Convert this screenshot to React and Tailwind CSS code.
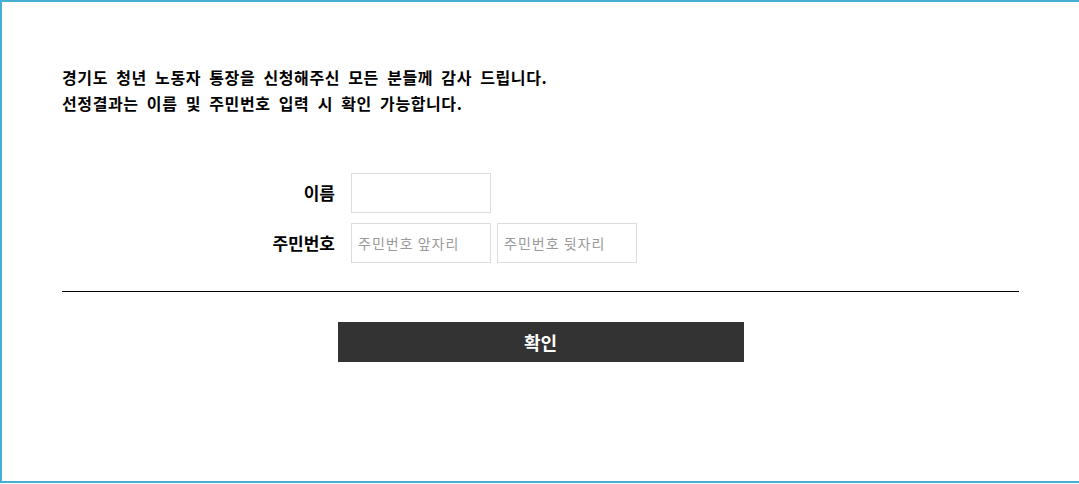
export default function App() {
  return (
    <div
      className="w-full h-[484px] bg-white overflow-hidden"
      style={{ fontFamily: '"Noto Sans CJK KR", "Noto Sans", sans-serif' }}
    >
      <div className="w-[1200px] h-[483px] border-t-2 border-l-2 border-b-2 border-[#45afd4] pl-[60px] pt-[62px]">
        <div className="w-[957px]">
          <p className="text-[16px] leading-[26px] font-bold text-black tracking-[0.6px] [word-spacing:4px]">
            경기도 청년 노동자 통장을 신청해주신 모든 분들께 감사 드립니다.
            <br />
            선정결과는 이름 및 주민번호 입력 시 확인 가능합니다.
          </p>

          <div className="mt-[57px] flex flex-col gap-[10px]">
            <div className="flex items-center">
              <label className="w-[273px] text-right text-[17px] font-bold text-black">이름</label>
              <input className="ml-[16px] w-[140px] h-[40px] border border-[#dcdcdc] px-[6px] text-[14px] outline-none" />
            </div>
            <div className="flex items-center">
              <label className="w-[273px] text-right text-[17px] font-bold text-black">주민번호</label>
              <input
                className="ml-[16px] w-[140px] h-[40px] border border-[#dcdcdc] px-[6px] text-[14px] tracking-[1px] placeholder-[#9a9a9a] outline-none"
                placeholder="주민번호 앞자리"
              />
              <input
                className="ml-[6px] w-[140px] h-[40px] border border-[#dcdcdc] px-[6px] text-[14px] tracking-[1px] placeholder-[#9a9a9a] outline-none"
                placeholder="주민번호 뒷자리"
              />
            </div>
          </div>

          <div className="mt-[28px] h-px bg-black" />

          <div className="mt-[30px] flex justify-center">
            <button className="w-[406px] h-[40px] bg-[#333333] text-white text-[18px] font-bold">
              확인
            </button>
          </div>
        </div>
      </div>
    </div>
  );
}
